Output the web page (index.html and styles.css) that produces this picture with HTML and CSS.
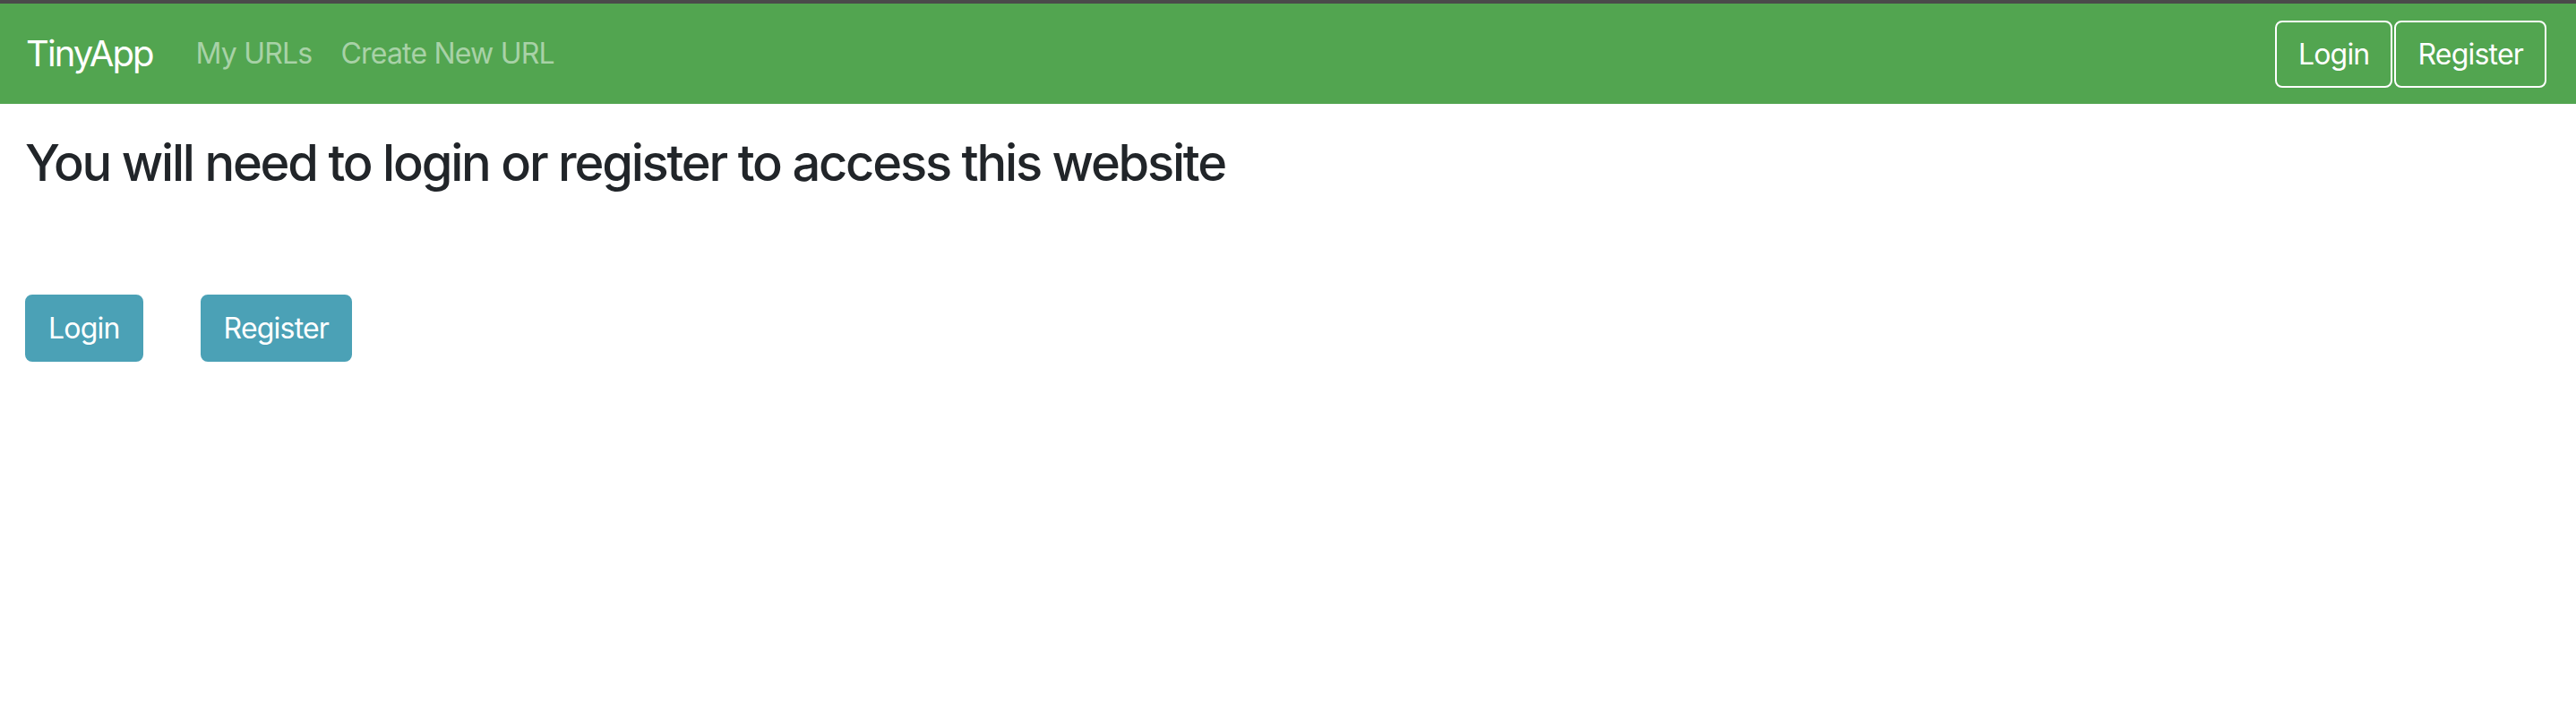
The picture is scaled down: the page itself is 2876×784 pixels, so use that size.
FILE: index.html
```html
<!DOCTYPE html>
<html lang="en">
<head>
<meta charset="utf-8">
<title>TinyApp</title>
<link rel="stylesheet" href="styles.css">
</head>
<body>
<nav class="navbar">
  <a class="brand" href="#">TinyApp</a>
  <div class="nav-links">
    <a class="nav-link" href="#">My URLs</a>
    <a class="nav-link" href="#">Create New URL</a>
  </div>
  <div class="nav-actions">
    <button class="btn btn-outline" type="button">Login</button>
    <button class="btn btn-outline" type="button">Register</button>
  </div>
</nav>
<main class="content">
  <h3 class="title">You will need to login or register to access this website</h3>
  <div class="actions">
    <button class="btn btn-info" type="button">Login</button>
    <button class="btn btn-info" type="button">Register</button>
  </div>
</main>
</body>
</html>
```
FILE: styles.css
```css
html, body {
  margin: 0;
  padding: 0;
  background: #ffffff;
}
body {
  font-family: Inter, "Noto Sans", "Liberation Sans", sans-serif;
  font-size: 32px;
  letter-spacing: -0.8px;
  color: #212529;
  border-top: 4px solid #4a4a4a;
}
.navbar {
  display: flex;
  align-items: center;
  height: 112px;
  box-sizing: border-box;
  padding: 16px 33px 16px 29px;
  background: #52a550;
}
.brand {
  font-size: 40px;
  letter-spacing: -1.9px;
  line-height: 60px;
  padding: 10px 0;
  margin-right: 32px;
  color: #ffffff;
  text-decoration: none;
}
.nav-links {
  display: flex;
  flex: 1;
}
.nav-link {
  padding: 8px 16px;
  line-height: 48px;
  color: rgba(255, 255, 255, 0.5);
  text-decoration: none;
}
.nav-actions {
  display: flex;
  gap: 2px;
}
.btn {
  font-family: inherit;
  font-size: 32px;
  letter-spacing: -0.8px;
  line-height: 47px;
  padding: 12px 24px;
  border-radius: 8px;
  cursor: pointer;
  margin: 0;
}
.btn-outline {
  background: transparent;
  color: #ffffff;
  border: 2px solid #ffffff;
}
.btn-info {
  background: #4ba1b6;
  color: #ffffff;
  border: 2px solid #4ba1b6;
}
.content {
  padding: 0 28px;
}
.title {
  margin: 33px 0 16px;
  font-size: 56px;
  font-weight: 500;
  letter-spacing: -2.2px;
  line-height: 1.2;
  color: #212529;
}
.actions {
  display: flex;
  gap: 64px;
  margin-top: 113px;
}
```
